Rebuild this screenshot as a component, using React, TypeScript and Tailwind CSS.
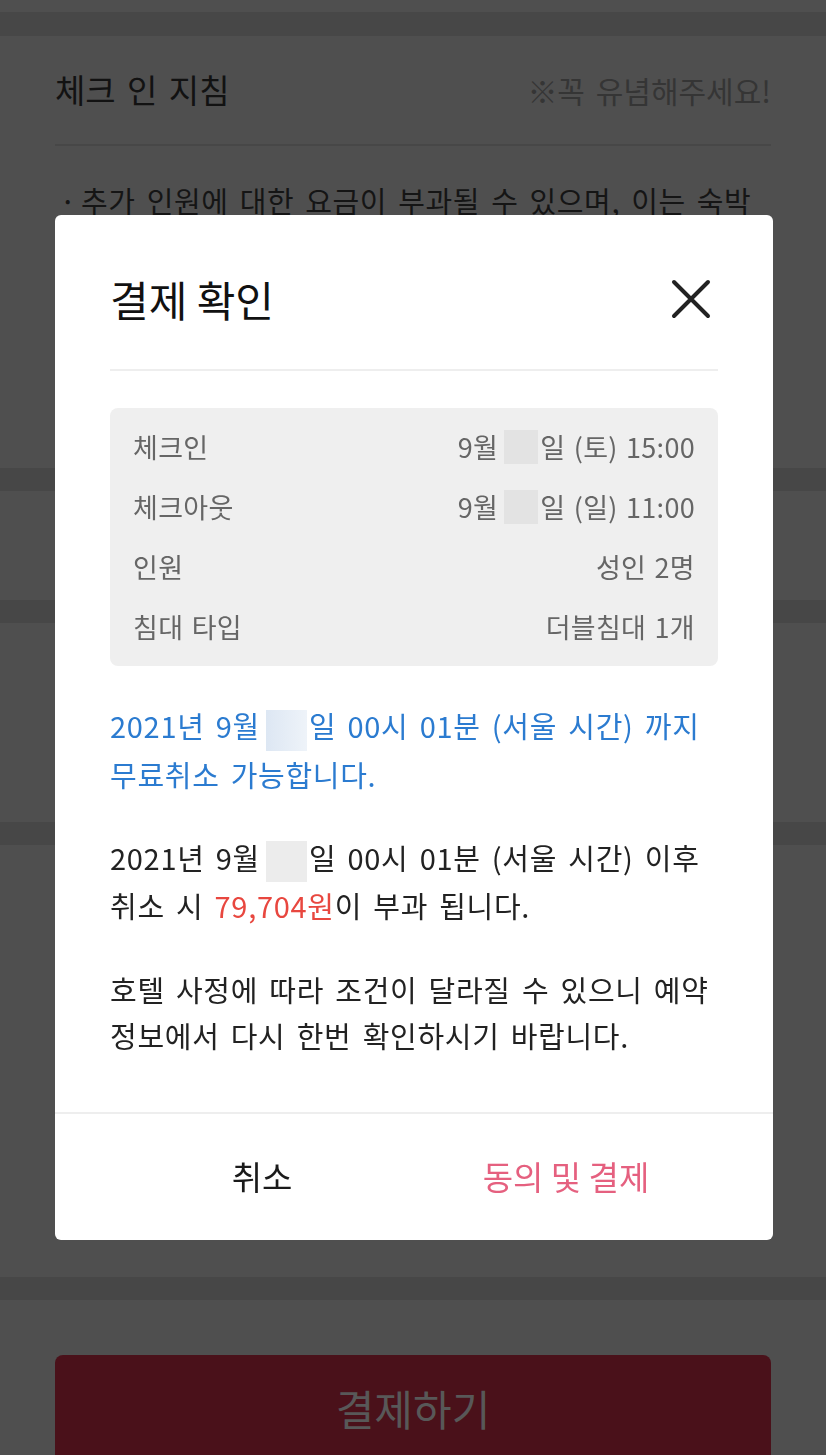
import React from "react";

const font = { fontFamily: '"Noto Sans CJK KR", "Noto Sans", sans-serif' };

function Blur({ tone = "gray" }: { tone?: "gray" | "blue" | "box" }) {
  if (tone === "box") {
    return <span className="inline-block align-middle w-[34px] h-[34px] ml-[6px] mr-[2px] bg-[#e3e3e3]" />;
  }
  const cls = tone === "blue" ? "bg-gradient-to-r from-[#dde7f3] to-[#eef3f9]" : "bg-[#ececec]";
  return <span className={`inline-block align-middle w-[41px] h-[41px] ml-[6px] mr-[2px] ${cls}`} />;
}

function InfoRow({ label, children }: { label: string; children: React.ReactNode }) {
  return (
    <div className="flex h-[60px] items-center justify-between">
      <span>{label}</span>
      <span className="flex items-center">{children}</span>
    </div>
  );
}

export default function App() {
  return (
    <div className="relative min-h-[1455px] bg-[#4f4f4f] overflow-hidden" style={font}>
      {/* ===== dimmed page behind the modal ===== */}
      <div className="h-[12px]" />
      <div className="h-[24px] bg-[#474747]" />
      <section className="h-[432px] px-[55px]">
        <div className="flex h-[108px] items-center justify-between [word-spacing:4px]">
          <h3 className="text-[33px] text-[#121212]">체크 인 지침</h3>
          <span className="text-[30px] text-[#353535]">※꼭 유념해주세요!</span>
        </div>
        <div className="h-[2px] bg-[#474747]" />
        <p className="mt-[32px] pl-[10px] text-[29px] leading-[44px] tracking-[0.6px] [word-spacing:4px] text-[#151515]">
          <span className="align-top text-[16px] mr-[10px]">•</span>추가 인원에 대한 요금이 부과될 수 있으며, 이는 숙박
        </p>
      </section>
      <div className="h-[23px] bg-[#474747]" />
      <section className="h-[109px]" />
      <div className="h-[23px] bg-[#474747]" />
      <section className="h-[199px]" />
      <div className="h-[23px] bg-[#474747]" />
      <section className="h-[432px]" />
      <div className="h-[23px] bg-[#474747]" />
      <section className="px-[55px] pt-[55px]">
        <div className="flex h-[104px] items-center justify-center rounded-t-[8px] bg-[#4a111a]">
          <span className="text-[42px] text-[#585858]">결제하기</span>
        </div>
      </section>

      {/* ===== modal ===== */}
      <div className="fixed inset-0 flex items-center pl-[55px]">
        <div className="w-[718px] rounded-[6px] bg-white">
          <div className="px-[55px]">
            <div className="flex h-[68px] items-center justify-between mt-[50px]">
              <h2 className="text-[42px] text-[#111]">결제 확인</h2>
              <button className="mr-[7px]">
                <svg width="40" height="40" viewBox="0 0 40 40">
                  <path d="M3 3 L37 37 M37 3 L3 37" stroke="#222" strokeWidth="4" strokeLinecap="round" />
                </svg>
              </button>
            </div>
            <div className="mt-[36px] h-[2px] bg-[#eeeeee]" />

            <div className="mt-[37px] rounded-[8px] bg-[#efefef] px-[23px] py-[9px] text-[27px] tracking-[0.3px] [word-spacing:2px] text-[#666]">
              <InfoRow label="체크인">
                9월<Blur tone="box" />일 (토) 15:00
              </InfoRow>
              <InfoRow label="체크아웃">
                9월<Blur tone="box" />일 (일) 11:00
              </InfoRow>
              <InfoRow label="인원">성인 2명</InfoRow>
              <InfoRow label="침대 타입">더블침대 1개</InfoRow>
            </div>

            <div className="text-[29px] leading-[46px] tracking-[0.7px] [word-spacing:4px]">
              <p className="mt-[36px] text-[#2b7bd0]">
                2021년 9월<Blur tone="blue" />일 00시 01분 (서울 시간) 까지
                <br />
                무료취소 가능합니다.
              </p>
              <p className="mt-[37px] text-[#222]">
                2021년 9월<Blur />일 00시 01분 (서울 시간) 이후
                <br />
                취소 시 <span className="text-[#e8473f]">79,704원</span>이 부과 됩니다.
              </p>
              <p className="mt-[38px] text-[#222]">
                호텔 사정에 따라 조건이 달라질 수 있으니 예약
                <br />
                정보에서 다시 한번 확인하시기 바랍니다.
              </p>
            </div>
          </div>

          <div className="mt-[54px] h-[2px] bg-[#eeeeee]" />
          <div className="grid h-[126px] grid-cols-2 px-[55px] text-[33px] [word-spacing:6px]">
            <button className="text-[#1a1a1a]">취소</button>
            <button className="text-[#e5607f]">동의 및 결제</button>
          </div>
        </div>
      </div>
    </div>
  );
}
